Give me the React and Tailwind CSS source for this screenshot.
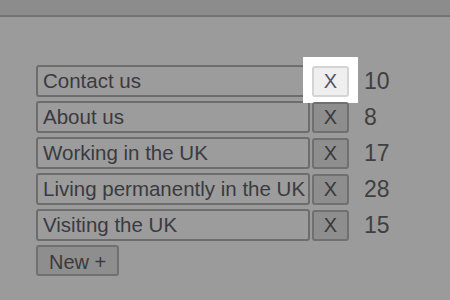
import React from "react";

const items = [
  { name: "Contact us", count: 10, focus: true },
  { name: "About us", count: 8 },
  { name: "Working in the UK", count: 17 },
  { name: "Living permanently in the UK", count: 28 },
  { name: "Visiting the UK", count: 15 },
];

function Row({ item }) {
  return (
    <div className="flex items-center h-8">
      <input
        readOnly
        value={item.name}
        className="w-[274px] h-8 pl-[5px] pr-0 bg-[#9c9c9c] border-2 border-[#6d6d6d] rounded-[3px] text-[20.5px] text-[#3a3a40] outline-none"
      />
      <div className="relative ml-[2px]">
        {item.focus && (
          <div className="absolute -left-[9px] -top-[9px] w-[55px] h-[46px] bg-white" />
        )}
        <button
          className={
            "relative w-[37px] h-[31px] border-2 rounded-[3px] text-[20px] leading-none " +
            (item.focus
              ? "bg-[#efefef] border-[#d4d4d4] text-[#55556a]"
              : "bg-[#8e8e8e] border-[#707070] text-[#3a3a3a]")
          }
        >
          X
        </button>
      </div>
      <span className="ml-[15px] text-[23px] text-[#404040]">{item.count}</span>
    </div>
  );
}

export default function App() {
  return (
    <div
      className="w-[450px] h-[300px] bg-[#9b9b9b] overflow-hidden"
      style={{ fontFamily: '"Liberation Sans", Arial, sans-serif' }}
    >
      <div className="h-[17px] bg-[#8c8c8c] border-b-2 border-[#747474]" />
      <div className="pl-[36px] pt-[48px] flex flex-col gap-1">
        {items.map((it) => (
          <Row key={it.name} item={it} />
        ))}
        <div>
          <button className="h-[31px] px-[11px] bg-[#8e8e8e] border-2 border-[#707070] rounded-[3px] text-[20px] text-[#3a3a3a]">
            New +
          </button>
        </div>
      </div>
    </div>
  );
}
